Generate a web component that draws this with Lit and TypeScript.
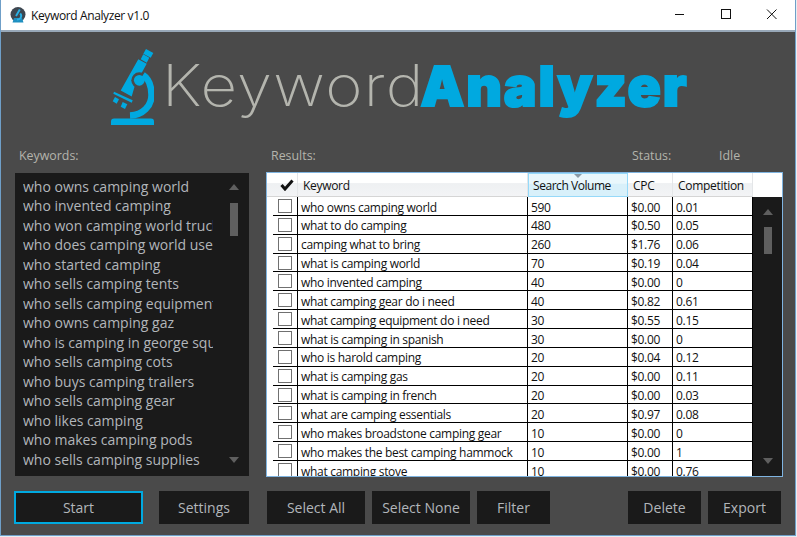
import { LitElement, html, css, svg } from "lit";
import { customElement } from "lit/decorators.js";

const KEYWORDS = [
  "who owns camping world", "who invented camping", "who won camping world truck series",
  "who does camping world use", "who started camping", "who sells camping tents",
  "who sells camping equipment", "who owns camping gaz", "who is camping in george square",
  "who sells camping cots", "who buys camping trailers", "who sells camping gear",
  "who likes camping", "who makes camping pods", "who sells camping supplies",
];
const ROWS = [
  ["who owns camping world", "590", "$0.00", "0.01"],
  ["what to do camping", "480", "$0.50", "0.05"],
  ["camping what to bring", "260", "$1.76", "0.06"],
  ["what is camping world", "70", "$0.19", "0.04"],
  ["who invented camping", "40", "$0.00", "0"],
  ["what camping gear do i need", "40", "$0.82", "0.61"],
  ["what camping equipment do i need", "30", "$0.55", "0.15"],
  ["what is camping in spanish", "30", "$0.00", "0"],
  ["who is harold camping", "20", "$0.04", "0.12"],
  ["what is camping gas", "20", "$0.00", "0.11"],
  ["what is camping in french", "20", "$0.00", "0.03"],
  ["what are camping essentials", "20", "$0.97", "0.08"],
  ["who makes broadstone camping gear", "10", "$0.00", "0"],
  ["who makes the best camping hammock", "10", "$0.00", "1"],
  ["what camping stove", "10", "$0.00", "0.76"],
];

const microscope = svg`
  <svg class="scope" viewBox="0 0 44 78" width="44" height="78">
    <g fill="#00a9e0">
      <polygon points="36,1 43.3,5 40.7,9.7 33.3,5.7"/>
      <polygon points="33.3,6.3 39.3,9.7 36.7,14.7 30.7,11.3"/>
      <polygon points="28.3,11.3 36.7,15.7 25,37 21.7,48.5 10.7,42.5"/>
      <polygon points="4,43.7 22.7,52.3 21.7,54.7 3.3,45.7"/>
      <polygon points="5,49 9,51.3 6.7,55.7 2.7,53.3"/>
      <polygon points="12.7,54 17.3,56.3 15,61 10.7,58.7"/>
      <path d="M1 77 V73.5 Q1 70.5 4 70.5 H41 Q44 70.5 44 73.5 V77 Z"/>
    </g>
    <circle cx="29.3" cy="32.3" r="8" fill="#4a4a4a"/>
    <circle cx="29.3" cy="32.3" r="5.4" fill="#00a9e0"/>
    <path d="M33 27 C39 31 41.5 39 41.5 47 C41.5 58 33 67 20 67.5" fill="none" stroke="#00a9e0" stroke-width="6.5"/>
  </svg>`;

const appIcon = svg`
  <svg viewBox="0 0 16 16" width="16" height="16">
    <circle cx="8" cy="7.5" r="7.5" fill="#3d4650"/>
    <path d="M2.5 15.5 H13.5 L12 11 H4 Z" fill="#1f8fc0"/>
    <path d="M9.8 2.5 L6 9 M10.2 6.5 A3.6 3.6 0 0 1 7 12.5" fill="none" stroke="#29b0e4" stroke-width="1.9"/>
  </svg>`;

@customElement("app-root")
export class AppRoot extends LitElement {
  static styles = css`
    :host {
      display: block;
      width: 797px;
      height: 537px;
      overflow: hidden;
      background: #e8eef2;
      font-family: "Open Sans", "Noto Sans", sans-serif;
    }
    .window {
      width: 796px;
      height: 536px;
      box-sizing: border-box;
      border: solid #6f9fc8;
      border-width: 0 1px 1px 1px;
      display: flex;
      flex-direction: column;
      background: #4a4a4a;
    }
    .titlebar {
      flex: none;
      height: 30px;
      background: #fff;
      border-bottom: 2px solid #98a8b8;
      display: flex;
      align-items: center;
      padding-left: 9px;
      color: #111;
      font-size: 12px;
    }
    .titlebar .title { margin-left: 5px; letter-spacing: -0.38px; }
    .controls { margin-left: auto; display: flex; }
    .controls svg { display: block; width: 46px; height: 30px; }
    .logo {
      flex: none;
      height: 105px;
      display: flex;
      align-items: flex-start;
      padding: 16px 0 0 109px;
      box-sizing: border-box;
    }
    .scope { flex: none; display: block; }
    .wordmark {
      margin: 3px 0 0 8px;
      font-size: 57px;
      line-height: 66px;
      white-space: nowrap;
    }
    .light {
      display: inline-block;
      font-family: Inter, sans-serif;
      font-weight: 200;
      color: #b4b5ae;
      letter-spacing: 1.2px;
      transform: scaleX(1.115);
      transform-origin: left center;
      margin-right: 23px;
    }
    .heavy {
      font-family: Inter, sans-serif;
      font-weight: 900;
      color: #00a9e0;
      font-size: 55px;
      letter-spacing: 1.9px;
      -webkit-text-stroke: 2px #00a9e0;
    }
    .labels {
      flex: none;
      height: 35px;
      box-sizing: border-box;
      padding-top: 1px;
      display: flex;
      align-items: center;
      color: #b4b4ac;
      font-size: 12.4px;
    }
    .labels span { display: block; }
    .l-keywords { margin-left: 18px; width: 252px; }
    .l-results { width: 361px; }
    .l-status { width: 87px; }
    .main {
      flex: none;
      height: 305px;
      display: flex;
      align-items: flex-start;
      padding-left: 14px;
    }
    .kw {
      flex: none;
      width: 234px;
      height: 303px;
      margin-top: 1px;
      background: #1a1a1a;
      display: flex;
      box-sizing: border-box;
      padding: 3.5px 0 0 8px;
      color: #b2b6ba;
      font-size: 14px;
      overflow: hidden;
    }
    .kw-list { width: 190px; flex: none; overflow: hidden; }
    .kw-item { height: 19.5px; line-height: 19.5px; white-space: nowrap; }
    .bar {
      flex: none;
      display: flex;
      flex-direction: column;
      align-items: center;
    }
    .kw .bar { width: 30px; margin-left: 6px; height: 298px; padding-top: 7px; box-sizing: border-box; }
    .up { width: 0; height: 0; border: 5px solid transparent; border-top: 0; border-bottom: 6px solid #5f5f5f; flex: none; }
    .down { width: 0; height: 0; border: 5px solid transparent; border-bottom: 0; border-top: 6px solid #5f5f5f; flex: none; margin-top: auto; }
    .thumb { width: 8px; background: #5f5f5f; flex: none; }
    .kw .thumb { height: 33px; margin-top: 13px; }
    .kw .down { margin-bottom: 12px; }
    .results {
      flex: none;
      width: 517px;
      height: 305px;
      margin-left: 17px;
      box-sizing: border-box;
      border: 1px solid #7fb4e0;
      background: #fff;
      display: flex;
      overflow: hidden;
    }
    .table {
      flex: none;
      width: 486px;
      font-size: 12px;
      color: #111;
      overflow: hidden;
      letter-spacing: -0.3px;
    }
    .head, .row {
      display: grid;
      grid-template-columns: 25px 230px 100px 45px 80px;
      margin-left: 6px;
    }
    .head { height: 24px; margin-left: 0; grid-template-columns: 31px 230px 100px 45px 80px; }
    .hc {
      background: linear-gradient(#fff 0, #fff 42%, #eef0f2 46%, #f3f4f6 100%);
      border-bottom: 1px solid #d5d5d5;
      border-right: 1px solid #e4e6e8;
      display: flex;
      align-items: center;
      padding: 1px 0 0 5px;
      box-sizing: border-box;
      position: relative;
    }
    .hc.check { justify-content: center; padding-left: 10px; }
    .hc.sorted {
      background: linear-gradient(#e9f7fc 0, #e9f7fc 42%, #d8f0fa 46%, #d8f0fa 100%);
      border: 1px solid #96d9f9;
      padding-left: 4px;
      letter-spacing: -0.45px;
    }
    .sort {
      position: absolute;
      top: 0;
      left: 45px;
      width: 0;
      height: 0;
      border: 4px solid transparent;
      border-bottom: 0;
      border-top: 4px solid #8a9aa6;
    }
    .row { height: 18.86px; box-sizing: border-box; }
    .c {
      border-right: 1px solid #000;
      border-bottom: 1px solid #000;
      padding: 1.5px 0 0 3px;
      line-height: 17.3px;
      white-space: nowrap;
      overflow: hidden;
      box-sizing: border-box;
    }
    .c.box { display: flex; align-items: center; padding: 0 0 0 5px; }
    .cb { width: 14px; height: 14px; border: 1px solid #707070; background: #fff; box-sizing: border-box; }
    .results .bar { width: 29px; background: #1a1a1a; height: 280px; margin-top: 24px; padding-top: 12px; box-sizing: border-box; }
    .results .thumb { height: 27px; margin-top: 12px; }
    .results .down { margin-bottom: 13px; }
    .buttons {
      flex: none;
      display: flex;
      margin-top: 14px;
      padding-left: 13px;
    }
    .btn {
      flex: none;
      height: 33px;
      background: #1a1a1a;
      color: #b2b6ba;
      font-size: 14px;
      display: flex;
      align-items: center;
      justify-content: center;
      box-sizing: border-box;
    }
    .btn.start { width: 129px; border: 2px solid #00a9e0; margin-right: 16px; }
    .btn.settings { width: 90px; margin-right: 18px; }
    .btn.all { width: 98px; margin-right: 7px; }
    .btn.none { width: 98px; margin-right: 7px; }
    .btn.filter { width: 73px; margin-right: 78px; }
    .btn.del { width: 73px; margin-right: 7px; }
    .btn.exp { width: 73px; }
  `;

  render() {
    return html`
      <div class="window">
        <div class="titlebar">
          ${appIcon}
          <span class="title">Keyword Analyzer v1.0</span>
          <div class="controls">
            <svg viewBox="0 0 46 30"><path d="M18 14.5 H27" stroke="#111" fill="none"/></svg>
            <svg viewBox="0 0 46 30"><rect x="18.5" y="9.5" width="9" height="9" fill="none" stroke="#111"/></svg>
            <svg viewBox="0 0 46 30"><path d="M18 9.5 L27.5 19 M27.5 9.5 L18 19" stroke="#111" fill="none"/></svg>
          </div>
        </div>
        <div class="logo">
          ${microscope}
          <div class="wordmark"><span class="light">Keyword</span><span class="heavy">Analyzer</span></div>
        </div>
        <div class="labels">
          <span class="l-keywords">Keywords:</span>
          <span class="l-results">Results:</span>
          <span class="l-status">Status:</span>
          <span>Idle</span>
        </div>
        <div class="main">
          <div class="kw">
            <div class="kw-list">
              ${KEYWORDS.map((k) => html`<div class="kw-item">${k}</div>`)}
            </div>
            <div class="bar"><div class="up"></div><div class="thumb"></div><div class="down"></div></div>
          </div>
          <div class="results">
            <div class="table">
              <div class="head">
                <div class="hc check">
                  <svg width="14" height="12" viewBox="0 0 14 12"><path d="M1.5 6 L5 10 L12.5 1.5" fill="none" stroke="#111" stroke-width="3"/></svg>
                </div>
                <div class="hc">Keyword</div>
                <div class="hc sorted"><span class="sort"></span>Search Volume</div>
                <div class="hc">CPC</div>
                <div class="hc">Competition</div>
              </div>
              ${ROWS.map(
                (r) => html`<div class="row">
                  <div class="c box"><div class="cb"></div></div>
                  ${r.map((v) => html`<div class="c">${v}</div>`)}
                </div>`
              )}
            </div>
            <div class="bar"><div class="up"></div><div class="thumb"></div><div class="down"></div></div>
          </div>
        </div>
        <div class="buttons">
          <div class="btn start">Start</div>
          <div class="btn settings">Settings</div>
          <div class="btn all">Select All</div>
          <div class="btn none">Select None</div>
          <div class="btn filter">Filter</div>
          <div class="btn del">Delete</div>
          <div class="btn exp">Export</div>
        </div>
      </div>
    `;
  }
}
